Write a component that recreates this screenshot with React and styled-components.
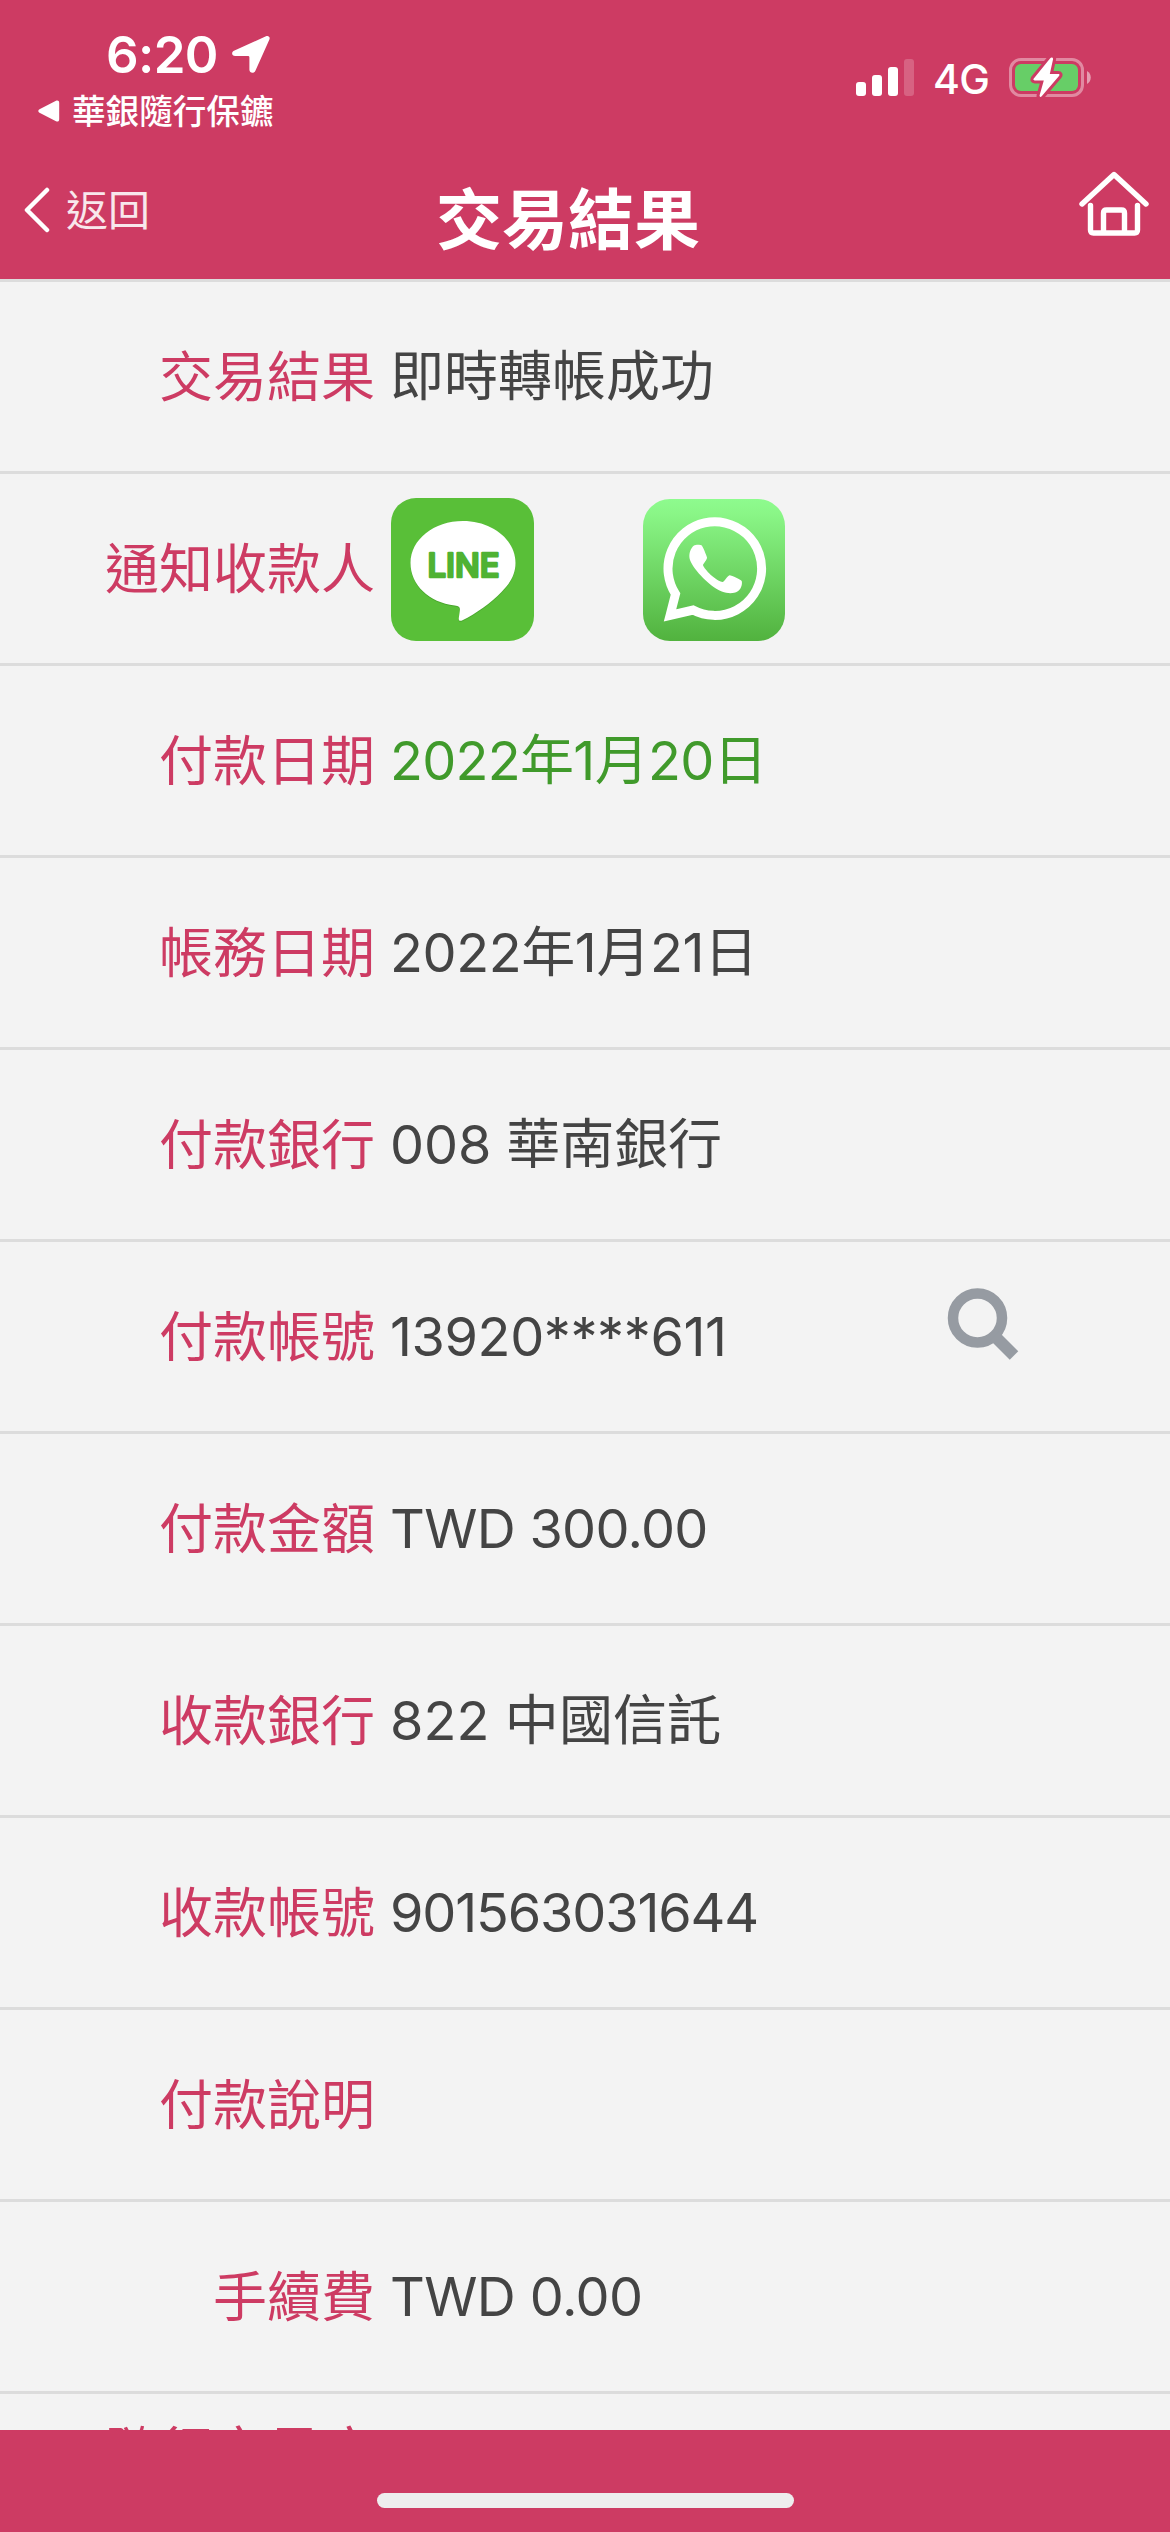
import styled, { createGlobalStyle } from 'styled-components';

//spacing is the letter spacing of the value, in px
const rows = [
  { label: '交易結果', value: '即時轉帳成功' },
  { label: '通知收款人', share: true },
  { label: '付款日期', value: '2022年1月20日', color: '#409a2b', spacing: -0.7 },
  { label: '帳務日期', value: '2022年1月21日', spacing: -0.4 },
  { label: '付款銀行', value: '008 華南銀行', spacing: -0.1 },
  { label: '付款帳號', value: '13920****611', spacing: -0.4, search: true },
  { label: '付款金額', value: 'TWD 300.00', spacing: -0.7 },
  { label: '收款銀行', value: '822 中國信託', spacing: 0.1 },
  { label: '收款帳號', value: '901563031644', spacing: -1.15 },
  { label: '付款說明', value: '' },
  { label: '手續費', value: 'TWD 0.00', spacing: -0.6 },
  { label: '隨行交易序號', value: '' },
];

/**
 * Transfer result page
 */
export default function App() {
  return (
    <>
      <GlobalStyle />
      <Screen>
        <StatusBar>
          <StatusLeft>
            <ClockLine>
              <Clock>6:20</Clock>
              <LocationIcon />
            </ClockLine>
            <BackToApp>
              <BackTriangle />
              <BackToAppName>華銀隨行保鑣</BackToAppName>
            </BackToApp>
          </StatusLeft>
          <StatusRight>
            <SignalIcon />
            <Network>4G</Network>
            <BatteryIcon />
          </StatusRight>
        </StatusBar>
        <NavBar>
          <BackButton>
            <ChevronIcon />
            <BackText>返回</BackText>
          </BackButton>
          <Title>交易結果</Title>
          <HomeButton>
            <HomeIcon />
          </HomeButton>
        </NavBar>
        <List>
          {rows.map((row) => (
            <Row key={row.label}>
              <Label>{row.label}</Label>
              {row.share ? (
                <ShareButtons>
                  <LineIcon />
                  <WhatsAppIcon />
                </ShareButtons>
              ) : (
                <Value $color={row.color} $spacing={row.spacing}>
                  {row.value}
                </Value>
              )}
              {row.search && <SearchIcon />}
            </Row>
          ))}
        </List>
        <Footer>
          <HomeIndicator />
        </Footer>
      </Screen>
    </>
  );
}

const LocationIcon = () => (
  <svg width="40" height="40" viewBox="0 0 40 40">
    <path
      d="M3.500 16.600 35 2.200c2.400-1 4.400.8 3.400 3.200L24.400 36.800c-1.400 3.200-6 2.400-6-1V23.400c0-1-.5-1.500-1.500-1.500H4.200c-3.600 0-4.300-3.900-.7-5.300z"
      fill="#fff"
    />
  </svg>
);

const BackTriangle = () => (
  <svg width="22" height="22" viewBox="0 0 22 22">
    <path
      d="M1.500 9.300 18 .8c1.800-.8 3.200 0 3.200 2v16.400c0 2-1.400 2.800-3.200 2L1.500 12.700c-1.600-.9-1.600-2.500 0-3.400z"
      fill="#fff"
    />
  </svg>
);

const SignalIcon = () => (
  <svg width="58" height="37" viewBox="0 0 58 37" fill="#fff">
    <rect x="0" y="23" width="10" height="14" rx="3" />
    <rect x="16" y="16" width="10" height="21" rx="3" />
    <rect x="32" y="8" width="10" height="29" rx="3" />
    <rect x="48" y="0" width="10" height="37" rx="3" opacity="0.2" />
  </svg>
);

const BatteryIcon = () => (
  <svg width="82" height="41" viewBox="0 0 82 41">
    <rect
      x="1.5"
      y="2.5"
      width="72"
      height="36"
      rx="10.5"
      fill="none"
      stroke="#fff"
      strokeOpacity="0.4"
      strokeWidth="3"
    />
    <path d="M78 14c5 2.500 5 10.500 0 13z" fill="#fff" opacity="0.5" />
    <rect x="6" y="7" width="63" height="27" rx="6" fill="#67ce67" />
    <path
      d="M41 1.500 24.800 21.500c-.8 1.200-.4 1.900.9 1.900h9.100L30.700 38c-.6 2.200 1 2.500 2.200 1L50 19c1-1.200.5-2-.8-2h-8.400L44 2.500c.5-2-1.600-2.800-3-1z"
      fill="#fff"
      stroke="#cd3b63"
      strokeWidth="6"
      strokeLinejoin="round"
      paintOrder="stroke"
    />
  </svg>
);

const ChevronIcon = () => (
  <svg width="26" height="46" viewBox="0 0 26 46">
    <path
      d="M23 3 3 23l20 20"
      fill="none"
      stroke="#fff"
      strokeWidth="4.5"
      strokeLinecap="round"
      strokeLinejoin="round"
    />
  </svg>
);

const HomeIcon = () => (
  <svg
    width="70"
    height="66"
    viewBox="0 0 70 66"
    fill="none"
    stroke="#fff"
    strokeWidth="5.4"
    strokeLinecap="round"
    strokeLinejoin="round"
  >
    <path d="M3 33 35 3.500 67 33" />
    <path d="M11.500 34.500V59c0 2 1 3 3 3h41c2 0 3-1 3-3V34.500" />
    <path d="M24.500 61V42c0-2 1-3 3-3h15c2 0 3 1 3 3v19" />
  </svg>
);

const LineIcon = () => (
  <svg width="143" height="143" viewBox="0 0 143 143">
    <rect width="143" height="143" rx="25" fill="#59bf38" />
    <path
      d="M72 23c29 0 52.500 18.500 52.500 42 0 11-5 20-14 29-10 10.500-26 22-39 28.300-2.500 1.200-4 .3-3.700-2.300l1-7c.6-4-.7-5-5-5.600C38 104.500 19.500 87 19.500 65 19.500 41.500 43 23 72 23z"
      fill="#3f9826"
      opacity="0.6"
      transform="translate(0 1)"
    />
    <path
      d="M72 23c29 0 52.500 18.500 52.500 42 0 11-5 20-14 29-10 10.500-26 22-39 28.300-2.500 1.200-4 .3-3.700-2.300l1-7c.6-4-.7-5-5-5.600C38 104.500 19.500 87 19.500 65 19.500 41.500 43 23 72 23z"
      fill="#fff"
    />
    <LogoText x="36.5" y="78.5" textLength="72" lengthAdjust="spacingAndGlyphs">
      LINE
    </LogoText>
  </svg>
);

const WhatsAppIcon = () => (
  <svg width="142" height="142" viewBox="0 0 142 142">
    <defs>
      <linearGradient id="whatsapp" x1="0" y1="0" x2="0" y2="1">
        <stop offset="0" stopColor="#8efb8e" />
        <stop offset="0.1" stopColor="#8af687" />
        <stop offset="1" stopColor="#51b23e" />
      </linearGradient>
    </defs>
    <rect width="142" height="142" rx="27" fill="url(#whatsapp)" />
    <path
      d="M27 116.500 32.500 95a46.800 46.800 0 1 1 17.500 16z"
      fill="none"
      stroke="#fff"
      strokeWidth="9"
      strokeMiterlimit="10"
    />
    <path
      d="M51 46.500c1.500-1 6-1 7.500-.3 1.200.7 5.200 10.800 5.500 12.300.4 1.800-4 6.500-4 7.500 0 2 10 14.500 19.500 17 1.500.3 5-6.300 7-6.800 1.400-.3 12 4.500 12.300 6 .7 4-1.300 8.300-4 10-4.500 2.700-9.800 2.500-16 .3C64.500 86.500 48.500 67.500 46.700 60c-1.200-5.500 1-11 4.300-13.500z"
      fill="#fff"
    />
  </svg>
);

const SearchIcon = () => (
  <SearchSvg width="72" height="76" viewBox="0 0 72 76" fill="none" stroke="#969ba2">
    <circle cx="30.5" cy="31" r="24.5" strokeWidth="10.5" />
    <path d="M47.500 49 67 68.500" strokeWidth="12" />
  </SearchSvg>
);

const GlobalStyle = createGlobalStyle`
  body {
    margin: 0;
    background: #f3f3f3;
    font-family: Inter, 'Noto Sans CJK TC', sans-serif;
  }
`;

const Screen = styled.main`
  display: flex;
  flex-direction: column;
  width: 1170px;
  height: 2532px;
  overflow: hidden;
`;

const StatusBar = styled.div`
  display: flex;
  justify-content: space-between;
  flex: none;
  height: 141px;
  box-sizing: border-box;
  padding: 24px 79px 0 38px;
  background: #cd3b63;
  color: #fff;
`;

const StatusLeft = styled.div`
  display: flex;
  flex-direction: column;
`;

const ClockLine = styled.div`
  display: flex;
  align-items: center;
  height: 60px;
  gap: 13px;
  padding-left: 68px;
`;

const Clock = styled.span`
  font-size: 51px;
  font-weight: 600;
  letter-spacing: -0.6px;
`;

const BackToApp = styled.div`
  display: flex;
  align-items: center;
  gap: 12px;
  height: 54px;
`;

const BackToAppName = styled.span`
  padding-bottom: 3px;
  font-size: 33.6px;
  font-weight: 500;
`;

const StatusRight = styled.div`
  display: flex;
  align-items: center;
  height: 41px;
  padding-top: 33px;
`;

const Network = styled.span`
  margin: 0 20px 0 19px;
  padding-top: 2px;
  font-size: 41px;
  font-weight: 500;
  letter-spacing: -0.8px;
`;

const NavBar = styled.header`
  display: grid;
  grid-template-columns: 283px 1fr 317px;
  align-items: center;
  flex: none;
  height: 138px;
  background: #cd3b63;
  color: #fff;
`;

const BackButton = styled.div`
  display: flex;
  align-items: center;
  gap: 16px;
  padding-left: 24px;
`;

const BackText = styled.span`
  padding-bottom: 5px;
  font-size: 42px;
  font-weight: 400;
  opacity: 0.88;
`;

const Title = styled.h1`
  margin: 20px 0 0;
  font-size: 66px;
  font-weight: 700;
  line-height: 90px;
  text-align: center;
`;

const HomeButton = styled.div`
  display: flex;
  justify-content: flex-end;
  padding: 0 21px 12px 0;
`;

const List = styled.section`
  flex: 1;
  min-height: 0;
  overflow: hidden;
`;

const Row = styled.div`
  display: flex;
  align-items: center;
  height: 192px;
  box-sizing: border-box;
  border-top: 3px solid #dcdcdc;
  font-size: 54px;
  line-height: 75px;
`;

const Label = styled.div`
  width: 270px;
  margin-left: 105px;
  padding-top: 2px;
  color: #cd3b63;
  text-align: right;
`;

const Value = styled.div`
  width: 540px;
  margin-left: 15px;
  color: ${({ $color }) => $color || '#444'};
  letter-spacing: ${({ $spacing }) => $spacing || 0}px;
  white-space: nowrap;
`;

const ShareButtons = styled.div`
  display: flex;
  align-items: flex-end;
  gap: 109px;
  margin-left: 16px;
  padding-top: 2px;
`;

const SearchSvg = styled.svg`
  margin: -24px 0 0 17px;
`;

const LogoText = styled.text`
  fill: #4fb233;
  stroke: #4fb233;
  stroke-width: 2.6px;
  stroke-linejoin: round;
  font-family: Inter, sans-serif;
  font-size: 33px;
  font-weight: 500;
`;

const Footer = styled.footer`
  display: flex;
  justify-content: center;
  flex: none;
  height: 102px;
  background: #cd3b63;
`;

const HomeIndicator = styled.div`
  width: 417px;
  height: 15px;
  margin-top: 63px;
  border-radius: 8px;
  background: #eeedee;
`;
